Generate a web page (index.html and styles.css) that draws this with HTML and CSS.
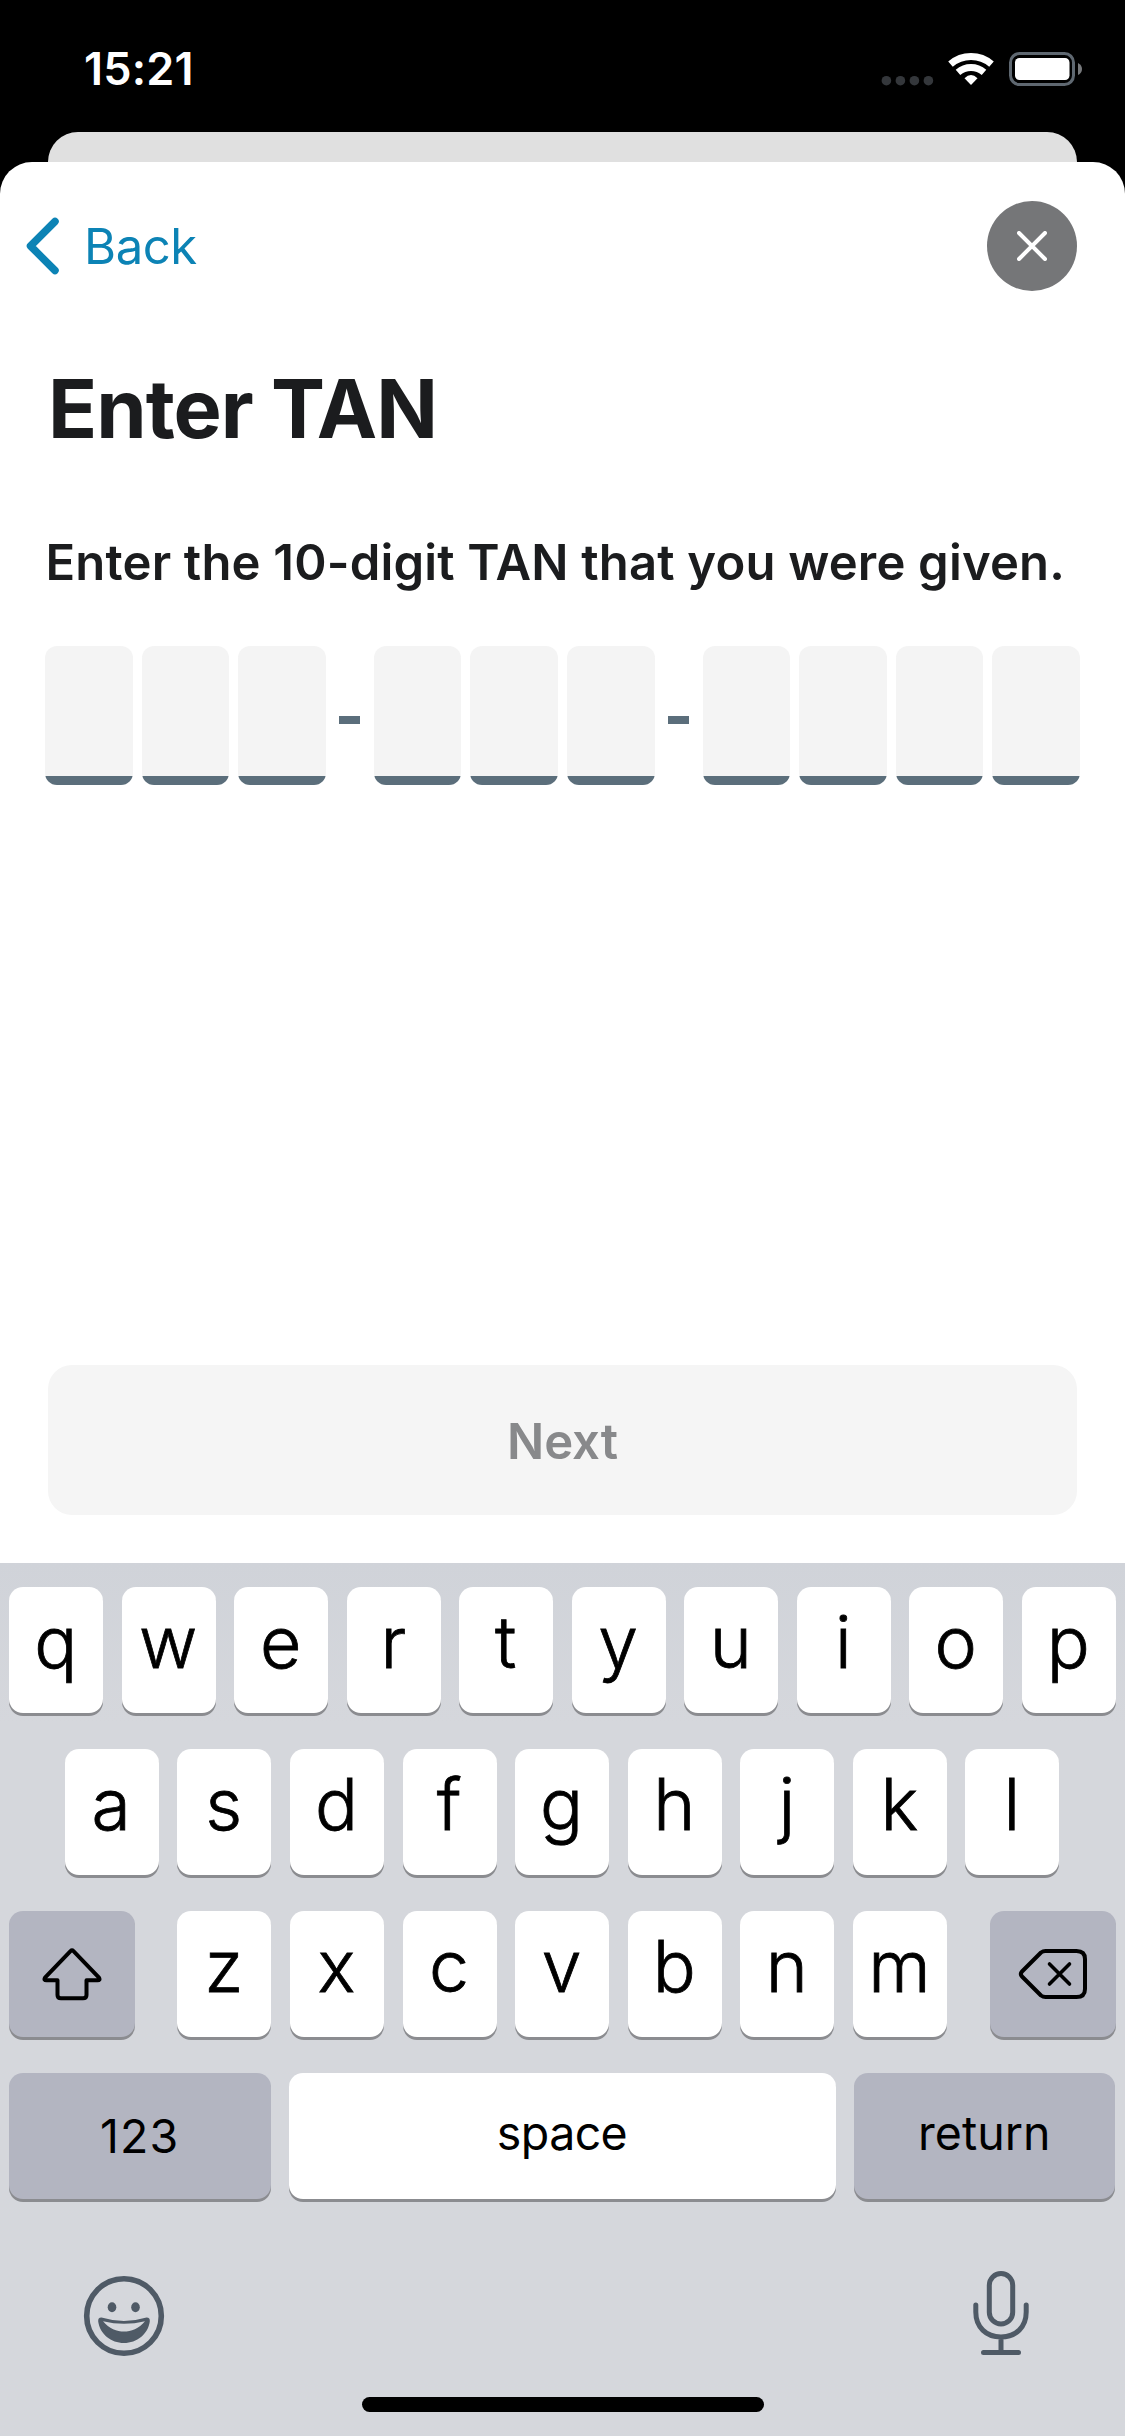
FILE: index.html
```html
<!DOCTYPE html>
<html lang="en">
<head>
<meta charset="utf-8">
<title>Enter TAN</title>
<link rel="stylesheet" href="styles.css">
</head>
<body>
<div class="screen">
  <header class="status">
    <span class="time">15:21</span>
    <svg class="status-icons" width="202" height="36" viewBox="0 0 202 36">
      <g fill="#34373b"><circle cx="6.4" cy="29.7" r="4.8"/><circle cx="20.4" cy="29.7" r="4.8"/><circle cx="34.4" cy="29.7" r="4.8"/><circle cx="48.4" cy="29.7" r="4.8"/></g>
      <g fill="none" stroke="#fff" stroke-width="7"><path d="M70.5 13.2A31.5 31.5 0 0 1 111.5 13.2"/><path d="M78 21.3A20 20 0 0 1 104 21.3"/></g>
      <path d="M84.5 27.2Q91 21 97.5 27.2L91 34Z" fill="#fff"/>
      <rect x="130.5" y="2.5" width="63" height="31" rx="9" fill="none" stroke="#5f6871" stroke-width="3"/>
      <rect x="135" y="7" width="54.5" height="22" rx="4.5" fill="#fff"/>
      <path d="M198 12Q202 14 202 18T198 24Z" fill="#77797c"/>
    </svg>
  </header>
  <div class="back-sheet"></div>
  <main class="sheet">
    <nav class="nav">
      <a class="back"><svg width="34" height="58" viewBox="0 0 34 58"><path d="M29 4.500L4.500 29L29 53.500" fill="none" stroke="#0c83b5" stroke-width="7.500" stroke-linecap="round" stroke-linejoin="round"/></svg><span class="back-label">Back</span></a>
      <button class="close" aria-label="Close"><svg width="30" height="30" viewBox="0 0 30 30"><path d="M2 2L28 28M28 2L2 28" stroke="#fff" stroke-width="4" stroke-linecap="round"/></svg></button>
    </nav>
    <h1 class="title">Enter TAN</h1>
    <p class="prompt">Enter the 10-digit TAN that you were given.</p>
    <div class="tan">
      <div class="group"><i class="digit"></i><i class="digit"></i><i class="digit"></i></div>
      <i class="dash"></i>
      <div class="group"><i class="digit"></i><i class="digit"></i><i class="digit"></i></div>
      <i class="dash"></i>
      <div class="group wide"><i class="digit"></i><i class="digit"></i><i class="digit"></i><i class="digit"></i></div>
    </div>
    <button class="next">Next</button>
  </main>
  <section class="keyboard">
    <div class="row"><span class="key">q</span><span class="key">w</span><span class="key">e</span><span class="key">r</span><span class="key">t</span><span class="key">y</span><span class="key">u</span><span class="key">i</span><span class="key">o</span><span class="key">p</span></div>
    <div class="row inner"><span class="key">a</span><span class="key">s</span><span class="key">d</span><span class="key">f</span><span class="key">g</span><span class="key">h</span><span class="key">j</span><span class="key">k</span><span class="key">l</span></div>
    <div class="row spread">
      <span class="key mod"><svg width="60" height="54" viewBox="0 0 60 54"><path d="M28.500 4.200Q30 2.700 31.500 4.200L57 30.700Q58.500 33.300 55.500 33.300H44.500V48Q44.500 51.300 41 51.300H19Q15.500 51.300 15.500 48V33.300H4.500Q1.500 33.300 3 30.700Z" fill="none" stroke="#000" stroke-width="4" stroke-linejoin="round"/></svg></span>
      <div class="row inner"><span class="key">z</span><span class="key">x</span><span class="key">c</span><span class="key">v</span><span class="key">b</span><span class="key">n</span><span class="key">m</span></div>
      <span class="key mod"><svg width="70" height="52" viewBox="0 0 70 52"><path d="M23 4.500Q25 3 27.500 3H58.500Q67 3 67 11V41Q67 49 58.500 49H27.500Q25 49 23 47.500L4 28.500Q1.500 26 4 23.500Z" fill="none" stroke="#000" stroke-width="4" stroke-linejoin="round"/><path d="M31.500 16L51.500 36M51.500 16L31.500 36" stroke="#000" stroke-width="3.600" stroke-linecap="round"/></svg></span>
    </div>
    <div class="row bottom"><span class="key fn numbers">123</span><span class="key space">space</span><span class="key fn">return</span></div>
    <div class="tools">
      <svg class="emoji" width="82" height="82" viewBox="0 0 82 82"><circle cx="41" cy="41" r="37.300" fill="none" stroke="#4f5a66" stroke-width="5.600"/><ellipse cx="29" cy="32.200" rx="4.300" ry="5" fill="#4f5a66"/><ellipse cx="52.500" cy="32.200" rx="4.300" ry="5" fill="#4f5a66"/><path fill="#4f5a66" fill-rule="evenodd" d="M18.500 42.600Q41 49.500 63.500 42.600Q67.200 42.500 66.800 46.500C65 59 54 68 41 68S17 59 15.200 46.500Q14.800 42.500 18.500 42.600ZM20 46.200C26 53.500 34 56.500 41 56.500S56 53.500 62 46.200Q41 51.500 20 46.200Z"/></svg>
      <svg class="mic" width="58" height="86" viewBox="0 0 58 86"><g fill="none" stroke="#4f5a66" stroke-width="5" stroke-linecap="round"><rect x="17.300" y="3.500" width="23.400" height="50.500" rx="11.700"/><path d="M3.800 35V42C3.800 57 14 67 29 67S54.200 57 54.200 42V35M29 67V82.500M11.500 82.500H46.500"/></g></svg>
    </div>
    <div class="home"></div>
  </section>
</div>
</body>
</html>
```
FILE: styles.css
```css
* { box-sizing: border-box; }
body { margin: 0; background: #000; font-family: Inter, "Liberation Sans", sans-serif; color: #1b1c1e; }
button { border: 0; padding: 0; font: inherit; }
svg { display: block; flex: none; }
.screen { width: 1125px; height: 2436px; display: flex; flex-direction: column; background: #000; overflow: hidden; }

.status { height: 132px; padding: 6px 43px 0 84px; display: flex; align-items: center; justify-content: space-between; color: #fff; }
.time { font-size: 45px; font-weight: 600; line-height: 54px; letter-spacing: 0.2px; }

.back-sheet { height: 30px; margin: 0 48px; border-radius: 30px 30px 0 0; background: #e0e0e0; }
.sheet { height: 1401px; display: flex; flex-direction: column; border-radius: 32px 32px 0 0; background: #fff; padding: 39px 48px 48px; }
.nav { height: 90px; display: flex; align-items: center; justify-content: space-between; }
.back { display: flex; align-items: center; margin-left: -22px; gap: 24px; color: #0c83b5; }
.back-label { padding-top: 2px; font-size: 49px; line-height: 60px; letter-spacing: -0.4px; }
.close { width: 90px; height: 90px; border-radius: 50%; background: #757678; display: flex; align-items: center; justify-content: center; }
.title { margin: 68px 0 0; font-size: 81px; font-weight: 700; line-height: 100px; letter-spacing: -1px; white-space: nowrap; }
.prompt { margin: 74px 0 0 -2.5px; font-size: 49px; font-weight: 600; line-height: 60px; letter-spacing: 0.18px; white-space: nowrap; }

.tan { margin: 53px -3px 0; height: 139px; display: flex; align-items: center; justify-content: space-between; }
.group { display: grid; grid-template-columns: repeat(3, 87.6px); gap: 9px; }
.group.wide { grid-template-columns: repeat(4, 87.6px); }
.digit { height: 139px; border-radius: 12px; background: linear-gradient(#f4f4f4 130px, #5b6e7b 130px); }
.dash { width: 21px; height: 8px; margin-top: 9px; background: #5b6e7b; }
.next { margin-top: auto; height: 150px; border-radius: 24px; background: #f5f5f5; color: #88898b; font-size: 49px; font-weight: 600; padding-top: 2px; }

.keyboard { flex: 1; padding: 24px 9px; display: flex; flex-direction: column; background: linear-gradient(#d0d3d9, #d5d7dc 160px); color: #000; }
.row { display: flex; justify-content: center; gap: 18.5px; }
.row + .row { margin-top: 36px; }
.inner { gap: 18.6px; padding-right: 0.8px; }
.row.spread { justify-content: space-between; gap: 0; }
.row.bottom { gap: 18px; padding-right: 1px; }
.key { width: 94px; height: 126px; padding: 0 1px 16px 0; border-radius: 14px; background: #fff; box-shadow: 0 3px 0 #8b8c90; display: flex; align-items: center; justify-content: center; font-size: 71.5px; font-weight: 300; line-height: 87px; -webkit-text-stroke: 0.8px #000; }
.mod { width: 126px; padding: 0; background: #b3b5c1; }
.fn, .space { padding: 0 0 7px; font-size: 46.5px; font-weight: 400; line-height: 56px; -webkit-text-stroke: 0; }
.fn { width: 261.5px; background: #b3b5c1; }
.numbers { padding-bottom: 0; letter-spacing: 1.2px; }
.space { flex: 1; letter-spacing: -0.6px; }
.tools { margin-top: 73px; padding: 0 86px 0 74px; display: flex; justify-content: space-between; align-items: flex-start; }
.emoji { margin-top: 3px; }
.mic { margin-top: -2px; }
.home { width: 402px; height: 15px; margin: 40px auto 0; border-radius: 8px; background: #000; }
```
